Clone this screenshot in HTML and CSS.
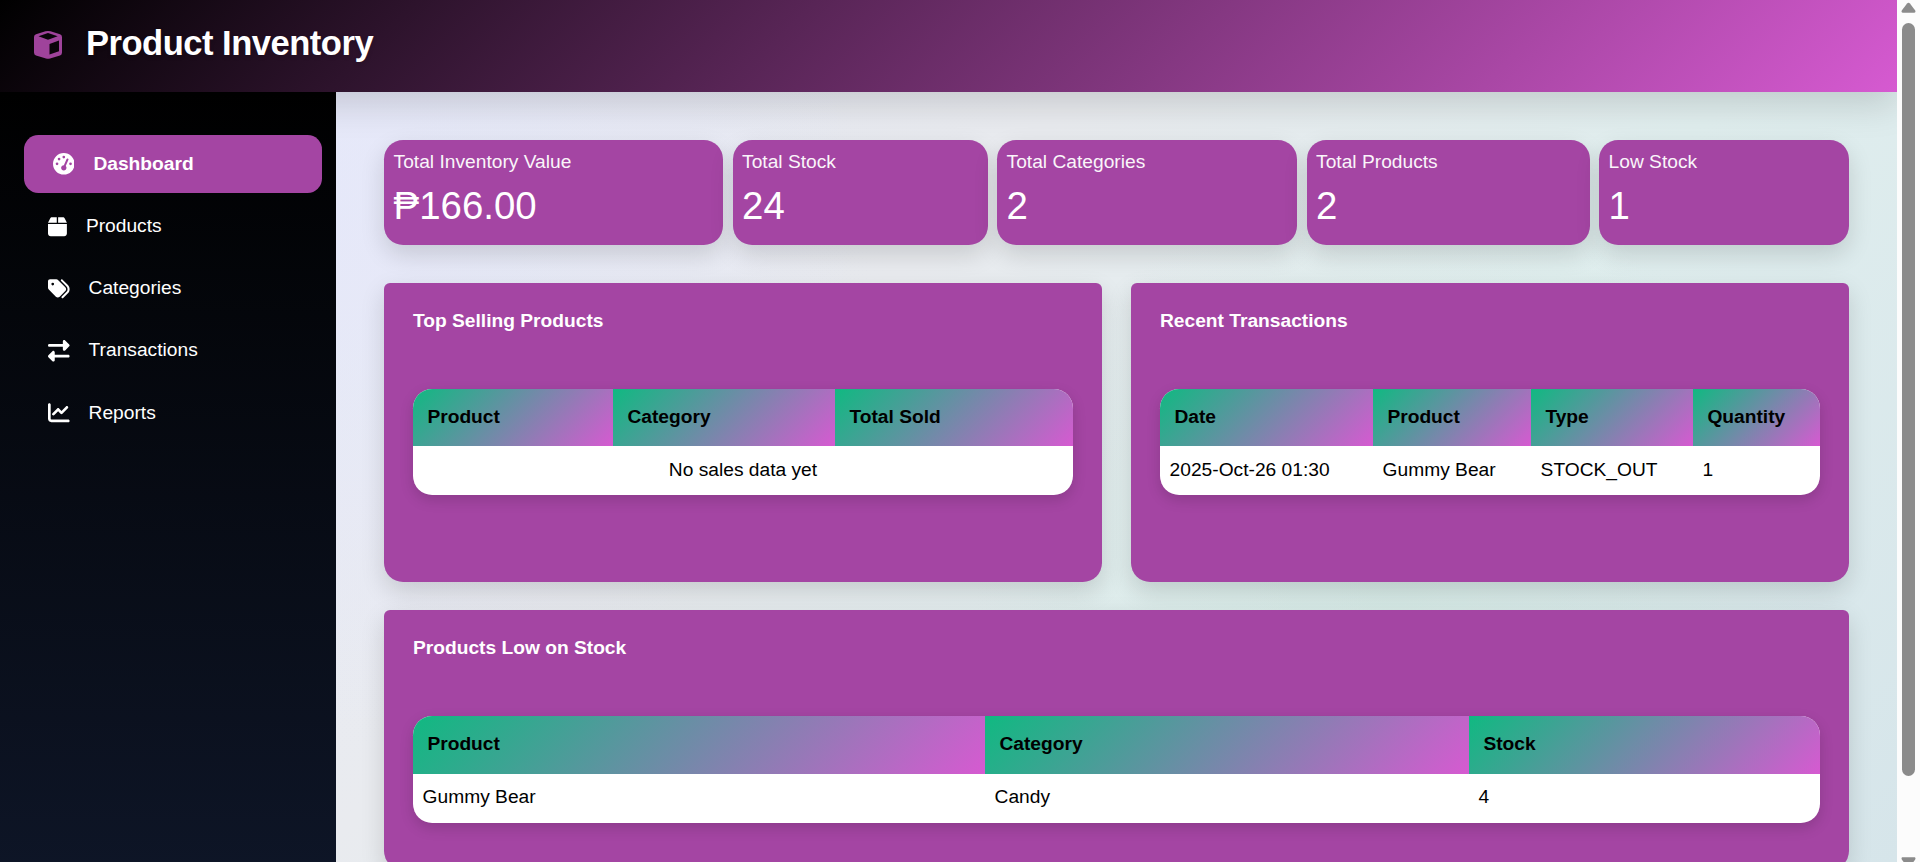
FILE: index.html
```html
<!DOCTYPE html>
<html lang="en">
<head>
<meta charset="utf-8">
<title>Product Inventory</title>
<link rel="stylesheet" href="styles.css">
</head>
<body>
<div class="window">
  <div class="page">
    <header class="header">
      <svg class="logo" viewBox="0 0 28 28"><path fill="currentColor" fill-rule="evenodd" d="M11.500.300Q14-.3 16.500.3L26 3.200Q28 4 28 6V21.500Q28 23.800 26 24.500L16 27.500Q14 28.100 12 27.500L2 24.500Q0 23.800 0 21.500V6Q0 4 2 3.200ZM4.500 5.300 14 8.700 23.700 5.300 14 2.100ZM15.500 13V23.500L25 20.300V9.500Z"/></svg>
      <h1 class="title">Product Inventory</h1>
    </header>
    <div class="body">
      <nav class="sidebar">
        <a class="link active"><svg class="ico" viewBox="0 0 512 512"><path fill="currentColor" fill-rule="evenodd" d="M0 256a256 256 0 1 1 512 0A256 256 0 1 1 0 256zM288 96a32 32 0 1 0-64 0 32 32 0 1 0 64 0zM256 416c35.300 0 64-28.700 64-64 0-17.400-6.900-33.100-18.100-44.600L366 161.700c5.300-12.100-.2-26.300-12.300-31.600s-26.300.2-31.600 12.300L257.900 288c-.6 0-1.300 0-1.900 0-35.300 0-64 28.700-64 64s28.700 64 64 64zM176 144a32 32 0 1 0-64 0 32 32 0 1 0 64 0zM96 288a32 32 0 1 0 0-64 32 32 0 1 0 0 64zm352-32a32 32 0 1 0-64 0 32 32 0 1 0 64 0z"/></svg><span>Dashboard</span></a>
        <a class="link"><svg class="ico narrow" viewBox="0 0 448 512"><path fill="currentColor" d="M50.700 58.500 0 160h208V32H93.700C75.500 32 58.900 42.300 50.700 58.500zM240 160h208L397.300 58.500C389.100 42.300 372.500 32 354.300 32H240v128zm208 32H0v224c0 35.300 28.700 64 64 64h320c35.300 0 64-28.700 64-64V192z"/></svg><span>Products</span></a>
        <a class="link"><svg class="ico" viewBox="0 0 512 512"><path fill="currentColor" d="M345 39.100 472.800 168.400c52.400 53 52.400 138.200 0 191.200L360.800 472.900c-9.300 9.400-24.500 9.500-33.900.2s-9.500-24.500-.2-33.900L438.600 325.900c33.900-34.300 33.900-89.400 0-123.700L310.900 72.900c-9.300-9.400-9.200-24.600.2-33.900s24.600-9.200 33.900.2zM0 229.500V80C0 53.500 21.500 32 48 32H197.500c17 0 33.300 6.700 45.300 18.700l168 168c25 25 25 65.500 0 90.500L277.300 442.700c-25 25-65.500 25-90.500 0l-168-168C6.700 262.700 0 246.500 0 229.500zM144 144a32 32 0 1 0-64 0 32 32 0 1 0 64 0z"/></svg><span>Categories</span></a>
        <a class="link"><svg class="ico" viewBox="0 0 512 512"><path fill="currentColor" d="M32 96l320 0V32c0-12.900 7.800-24.600 19.800-29.600s25.700-2.200 34.900 6.900l96 96c6 6 9.400 14.100 9.400 22.600s-3.400 16.600-9.400 22.600l-96 96c-9.200 9.200-22.900 11.900-34.900 6.900s-19.800-16.600-19.800-29.600V160L32 160c-17.700 0-32-14.300-32-32s14.300-32 32-32zM480 352c17.700 0 32 14.300 32 32s-14.300 32-32 32H160v64c0 12.900-7.800 24.600-19.800 29.600s-25.700 2.200-34.900-6.900l-96-96c-6-6-9.400-14.100-9.400-22.600s3.400-16.600 9.400-22.600l96-96c9.200-9.200 22.900-11.900 34.900-6.900s19.800 16.600 19.800 29.600l0 64H480z"/></svg><span>Transactions</span></a>
        <a class="link"><svg class="ico" viewBox="0 0 512 512"><path fill="currentColor" d="M64 64c0-17.700-14.300-32-32-32S0 46.300 0 64V400c0 44.200 35.800 80 80 80H480c17.700 0 32-14.300 32-32s-14.300-32-32-32H80c-8.800 0-16-7.200-16-16V64zm406.600 86.600c12.500-12.500 12.500-32.800 0-45.300s-32.800-12.500-45.300 0L320 210.700l-57.400-57.400c-12.500-12.500-32.800-12.500-45.300 0l-112 112c-12.500 12.500-12.500 32.800 0 45.300s32.800 12.500 45.300 0L240 221.300l57.400 57.400c12.500 12.500 32.800 12.500 45.300 0l128-128z"/></svg><span>Reports</span></a>
      </nav>
      <main class="main">
        <section class="stats">
          <div class="stat"><div class="label">Total Inventory Value</div><div class="value">₱166.00</div></div>
          <div class="stat"><div class="label">Total Stock</div><div class="value">24</div></div>
          <div class="stat"><div class="label">Total Categories</div><div class="value">2</div></div>
          <div class="stat"><div class="label">Total Products</div><div class="value">2</div></div>
          <div class="stat"><div class="label">Low Stock</div><div class="value">1</div></div>
        </section>
        <section class="panels">
          <div class="panel">
            <h2>Top Selling Products</h2>
            <div class="table selling">
              <div class="th">Product</div><div class="th">Category</div><div class="th">Total Sold</div>
              <div class="td empty">No sales data yet</div>
            </div>
          </div>
          <div class="panel">
            <h2>Recent Transactions</h2>
            <div class="table recent">
              <div class="th">Date</div><div class="th">Product</div><div class="th">Type</div><div class="th">Quantity</div>
              <div class="td">2025-Oct-26 01:30</div><div class="td">Gummy Bear</div><div class="td">STOCK_OUT</div><div class="td">1</div>
            </div>
          </div>
          <div class="panel wide">
            <h2>Products Low on Stock</h2>
            <div class="table low">
              <div class="th">Product</div><div class="th">Category</div><div class="th">Stock</div>
              <div class="td">Gummy Bear</div><div class="td">Candy</div><div class="td">4</div>
            </div>
          </div>
        </section>
      </main>
    </div>
  </div>
  <div class="scrollbar">
    <svg class="arrow" viewBox="0 0 16 11"><path fill="#8b8b8b" d="M6.500 1.200c.8-1 2.200-1 3 0l5.500 7.200c.9 1.200.4 2.600-1 2.600H2c-1.400 0-1.900-1.400-1-2.600Z"/></svg>
    <div class="thumb"></div>
    <svg class="arrow down" viewBox="0 0 16 11"><path fill="#8b8b8b" d="M6.500 9.800c.8 1 2.200 1 3 0L15 2.600C15.900 1.400 15.400 0 14 0H2C.6 0 .1 1.400 1 2.600Z"/></svg>
  </div>
</div>
</body>
</html>
```
FILE: styles.css
```css
* { box-sizing: border-box; margin: 0; }

body {
  font-family: "Liberation Sans", Arial, sans-serif;
  font-size: 19.2px;
  line-height: 28.8px;
  overflow: hidden;
}

.window { display: flex; height: 862px; overflow: hidden; }
.page { flex: 1; display: flex; flex-direction: column; min-width: 0; overflow: hidden; }

.header {
  flex: none;
  height: 92px;
  display: flex;
  align-items: center;
  gap: 24px;
  padding: 0 34px 6px;
  background: linear-gradient(135deg, #000 0%, #d65ad1 100%);
  box-shadow: 0 12px 36px rgba(0, 0, 0, .15);
  z-index: 2;
}
.logo { width: 28px; height: 28px; color: #9f439b; margin-top: 3px; }
.title { font-size: 34.56px; line-height: 1; letter-spacing: -.5px; color: #fff; text-shadow: 0 2px 4px rgba(0, 0, 0, .15); }

.body { flex: 1; display: flex; min-height: 0; }

.sidebar {
  flex: none;
  width: 336px;
  padding: 43px 14px 0 24px;
  background: linear-gradient(180deg, #000 0%, #0f172a 110%);
  position: relative;
  z-index: 3;
}
.link { display: flex; align-items: center; gap: 19px; height: 58px; margin-bottom: 4.300px; padding-left: 24px; color: #fff; }
.link.active { padding-left: 28.800px; background: #a445a3; border-radius: 14.400px; font-weight: 700; }
.ico { width: 21.600px; height: 21.600px; flex: none; }
.ico.narrow { width: 18.900px; }

.main {
  flex: 1;
  padding: 48px;
  min-width: 0;
  background:
    radial-gradient(circle at 0% 15%, rgba(228, 231, 252, .6), transparent 32%),
    radial-gradient(circle at 68% 66%, rgba(208, 233, 225, .5), transparent 36%),
    linear-gradient(135deg, #e8eaf6 0%, #e9ebef 32%, #e0eeee 60%, #d6e5ea 100%);
}

.stats { display: grid; grid-template-columns: 339px 255px 300px 283px 250px; justify-content: space-between; height: 105px; margin-bottom: 38px; }
.stat { padding: 8px 9.600px; border-radius: 19.200px; background: #a445a3; box-shadow: 0 9.600px 24px rgba(0, 0, 0, .14); color: #fff; }
.label { opacity: .95; }
.value { font-size: 38.400px; line-height: 57.600px; }

.panels { display: grid; grid-template-columns: 1fr 1fr; grid-template-rows: 299px 260px; gap: 28px 29px; }
.panel { padding: 24px 29px 0; border-radius: 6px 6px 19.200px 19.200px; background: #a445a3; box-shadow: 0 9.600px 24px rgba(0, 0, 0, .14); }
.panel.wide { grid-column: 1 / -1; }
.panel h2 { font-size: 19.200px; line-height: 28px; color: #fff; margin-bottom: 54px; }

.table { display: grid; grid-template-rows: 57px 49px; border-radius: 19.200px; overflow: hidden; background: #fff; box-shadow: 0 5px 14px rgba(0, 0, 0, .15); color: #000; }
.selling { grid-template-columns: 200px 222px 238px; }
.recent { grid-template-columns: 213px 158px 162px 1fr; }
.low { grid-template-columns: 572px 484px 1fr; grid-template-rows: 58px 49px; }
.th { padding: 14px 14.400px; font-weight: 700; background: linear-gradient(135deg, #10b981, #d65ad1); }
.td { padding: 9.600px; }
.low .td { padding-top: 9px; }
.empty { grid-column: 1 / -1; text-align: center; }

.scrollbar { flex: none; width: 23px; background: #fcfcfc; display: flex; flex-direction: column; align-items: center; }
.arrow { width: 15px; height: 11px; margin: 2px 0 10px; flex: none; }
.thumb { width: 13px; height: 753px; border-radius: 7px; background: #8b8b8b; flex: none; }
.arrow.down { margin: 81px 0 0; }
```
